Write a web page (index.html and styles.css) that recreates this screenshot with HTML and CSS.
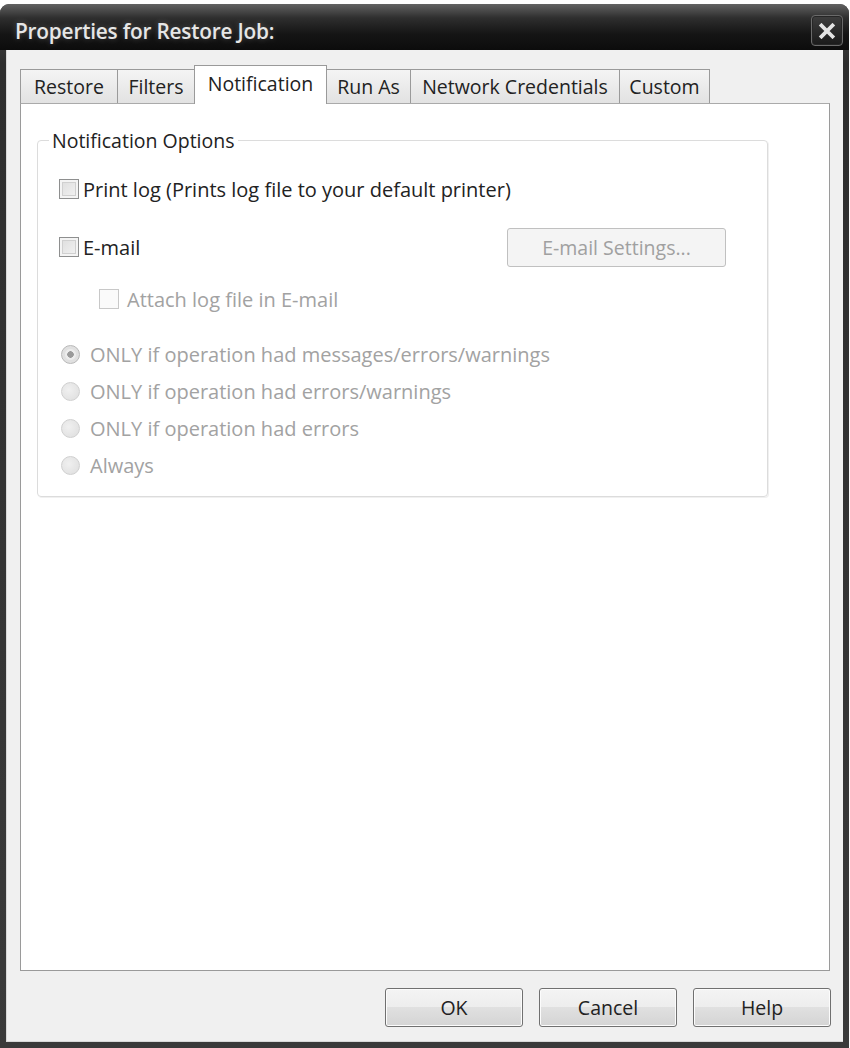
FILE: index.html
```html
<!DOCTYPE html>
<html>
<head>
<meta charset="utf-8">
<link rel="stylesheet" href="styles.css">
</head>
<body>
<div class="window">
  <div class="titlebar">
    <span class="title">Properties for Restore Job:</span>
    <div class="close">
      <svg width="18" height="16" viewBox="0 0 18 16"><path d="M3.5 2.5 L14.5 13.5 M14.5 2.5 L3.5 13.5" stroke="#e4e4e4" stroke-width="3.8" stroke-linecap="square"/></svg>
    </div>
  </div>
  <div class="client">
    <div class="tabs">
      <div class="tab t-restore">Restore</div>
      <div class="tab t-filters">Filters</div>
      <div class="tab active t-notif">Notification</div>
      <div class="tab t-runas">Run As</div>
      <div class="tab t-net">Network Credentials</div>
      <div class="tab t-custom">Custom</div>
    </div>
    <div class="panel">
      <fieldset class="group">
        <legend>Notification Options</legend>
        <div class="row row-print">
          <span class="check"></span><span class="label">Print log (Prints log file to your default printer)</span>
        </div>
        <div class="row row-email">
          <span class="check"></span><span class="label">E-mail</span>
          <span class="spacer"></span>
          <span class="btn-disabled">E-mail Settings...</span>
        </div>
        <div class="row row-attach">
          <span class="check dis"></span><span class="label dis">Attach log file in E-mail</span>
        </div>
        <div class="radios">
          <div class="row radio-row"><span class="radio sel"></span><span class="label dis">ONLY if operation had messages/errors/warnings</span></div>
          <div class="row radio-row"><span class="radio"></span><span class="label dis">ONLY if operation had errors/warnings</span></div>
          <div class="row radio-row"><span class="radio"></span><span class="label dis">ONLY if operation had errors</span></div>
          <div class="row radio-row"><span class="radio"></span><span class="label dis">Always</span></div>
        </div>
      </fieldset>
    </div>
    <div class="buttons">
      <div class="btn">OK</div>
      <div class="btn">Cancel</div>
      <div class="btn">Help</div>
    </div>
  </div>
</div>
</body>
</html>
```
FILE: styles.css
```css
html, body {
  margin: 0;
  padding: 0;
  background: #ffffff;
}
body {
  width: 850px;
  height: 1048px;
  overflow: hidden;
  font-family: "Open Sans", "Liberation Sans", sans-serif;
  color: #222;
}
.window {
  margin-top: 4px;
  width: 849px;
  height: 1044px;
  box-sizing: border-box;
  background: linear-gradient(#4a4a4a, #2e2e2e 60px, #3a3a3a);
  border-radius: 9px 9px 0 0;
  padding: 0 6px 6px 6px;
  display: flex;
  flex-direction: column;
}
.titlebar {
  height: 46px;
  margin: 0 -6px;
  padding: 0 6px 0 15px;
  border-radius: 9px 9px 0 0;
  background: linear-gradient(#626262 0px, #2e2e2e 14px, #151515 30px, #0c0c0c 46px);
  display: flex;
  align-items: center;
  flex: none;
}
.title {
  flex: 1;
  color: #e6e6e6;
  font-size: 20.8px;
  font-weight: 600;
  letter-spacing: -0.2px;
  padding-top: 8px;
  text-shadow: 0 0 6px rgba(255,255,255,0.25);
}
.close {
  width: 32px;
  height: 31px;
  margin-top: 11px;
  align-self: flex-start;
  box-sizing: border-box;
  border: 1px solid #6a6a6a;
  border-radius: 4px;
  background: linear-gradient(#3e3e3e, #1a1a1a);
  box-shadow: inset 0 0 0 1px #262626;
  display: flex;
  align-items: center;
  justify-content: center;
}
.client {
  flex: 1;
  background: #f0f0f0;
  border-left: 1px solid #d8d8d8;
  border-bottom: 1px solid #d8d8d8;
  display: flex;
  flex-direction: column;
  padding: 15px 13px 0 13px;
}
.tabs {
  display: flex;
  align-items: flex-end;
  height: 38px;
  flex: none;
  position: relative;
  z-index: 1;
}
.tab {
  box-sizing: border-box;
  height: 34px;
  border: 1px solid #9a9a9a;
  border-bottom: none;
  border-right: none;
  background: linear-gradient(#f4f4f4, #e2e2e2);
  font-size: 19.5px;
  color: #222;
  display: flex;
  align-items: center;
  justify-content: center;
}
.tab.active {
  height: 39px;
  margin-bottom: -1px;
  background: #ffffff;
  border-right: 1px solid #9a9a9a;
  padding-bottom: 4px;
}
.tab.active + .tab { border-left: none; }
.t-restore { width: 97px; }
.t-filters { width: 77px; }
.t-notif { width: 133px; }
.t-runas { width: 83px; }
.t-net { width: 209px; }
.t-custom { width: 91px; border-right: 1px solid #9a9a9a; }
.panel {
  box-sizing: border-box;
  height: 868px;
  flex: none;
  background: #ffffff;
  border: 1px solid #9a9a9a;
  border-top-color: #aaaaaa;
  padding: 23px 0 0 16px;
}
.group {
  width: 731px;
  height: 370px;
  box-sizing: border-box;
  margin: 0;
  padding: 20px 0 0 21px;
  border: 1px solid #dcdcdc;
  border-radius: 4px;
  box-shadow: 1px 1px 0 #f0f0f0;
}
.group legend {
  font-size: 19.5px;
  color: #222;
  padding: 0 3px;
  margin-left: -10px;
}
.row {
  display: flex;
  align-items: center;
  font-size: 20px;
}
.row-print { height: 30px; }
.row-email { height: 40px; margin-top: 23px; width: 667px; }
.row-attach { height: 30px; margin-top: 17px; padding-left: 40px; }
.radios { margin-top: 22px; }
.radio-row { height: 37px; }
.spacer { flex: 1; }
.check {
  width: 20px;
  height: 20px;
  box-sizing: border-box;
  border: 1px solid #8e8f8f;
  background: linear-gradient(135deg, #dcdcdc, #f4f4f4);
  box-shadow: inset 0 0 0 2px #f4f4f4, inset 0 0 0 3px #d0d0d0;
  margin-right: 4px;
  flex: none;
}
.check.dis {
  border-color: #c8c8c8;
  background: #fafafa;
  box-shadow: none;
  margin-right: 8px;
}
.label.dis { color: #a2a2a2; }
.radio {
  width: 19px;
  height: 19px;
  box-sizing: border-box;
  border-radius: 50%;
  border: 1px solid #d0d0d0;
  background: radial-gradient(circle at 40% 40%, #f0f0f0, #dddddd);
  margin: 0 10px 0 2px;
  flex: none;
}
.radio.sel {
  border-color: #b8b8b8;
  background: radial-gradient(circle, #9a9a9a 0 3px, #ececec 3.5px 5px, #e0e0e0 6px);
}
.btn-disabled {
  box-sizing: border-box;
  width: 219px;
  height: 39px;
  border: 1px solid #c0c0c0;
  border-radius: 3px;
  background: #f4f4f4;
  color: #a0a0a0;
  font-size: 19.5px;
  display: flex;
  align-items: center;
  justify-content: center;
}
.buttons {
  display: flex;
  justify-content: flex-end;
  gap: 16px;
  padding-top: 17px;
  margin-right: -1px;
}
.btn {
  box-sizing: border-box;
  width: 138px;
  height: 39px;
  border: 1px solid #707070;
  border-radius: 3px;
  background: linear-gradient(#f4f4f4 0%, #ededed 49%, #e0e0e0 50%, #d4d4d4 100%);
  box-shadow: inset 0 0 0 1px #fcfcfc;
  font-size: 19.5px;
  color: #222;
  display: flex;
  align-items: center;
  justify-content: center;
}
```
